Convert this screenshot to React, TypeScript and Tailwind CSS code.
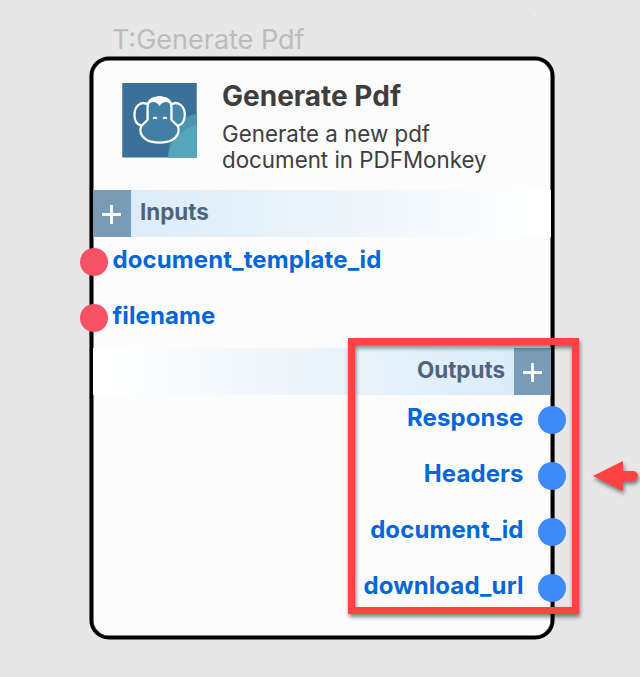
import React from "react";

function Monkey() {
  return (
    <svg viewBox="0 0 75 75" className="h-[74.5px] w-[75px] shrink-0">
      <rect width="75" height="75" fill="#3b7099" />
      <path d="M75 31C69 32 62 35 58 40C50 49 47 62 46 75H75Z" fill="#4a96b1" />
      <path d="M75 42C66 44 59 50 54 56C48 63 47 69 46 75H75Z" fill="#55a5bb" />
      <path d="M50 21C58 17 63.500 25 63.500 33C63.500 39 60 43 56 44L50 37Z" fill="#4588a8" />
      <g stroke="white" strokeWidth="2.3" strokeLinecap="round" strokeLinejoin="round">
        <path d="M24.500 21C18 18 12.300 24 12.300 32C12.300 38 15 42 19 43" fill="none" />
        <path d="M50.500 21C57 18 63 24 63 32C63 38 60 42 56.500 43" fill="none" />
        <path
          d="M25.500 24C25.500 18 30 14.500 37.500 14.500C45 14.500 49.500 18 49.500 24V37L56 43.500C57 46 57 48 56.500 50C54 57 47 60 37.500 60C28 60 21 57 18.500 50C18 48 18 46 19 43.500L25.500 37Z"
          fill="#427fa5"
        />
      </g>
      <path
        d="M25 24C25 17.500 30 13.500 37.500 13.500C45 13.500 50 17.500 50 24C48 18.500 41 17 37.500 23.500C34 17 27 18.500 25 24Z"
        fill="white"
      />
      <path d="M31 35.800Q33 34 35 35.800M41 35.800Q43 34 45 35.800" fill="none" stroke="white" strokeWidth="1.700" />
    </svg>
  );
}

function Plus() {
  return (
    <div className="flex h-full w-[37.5px] shrink-0 items-center justify-center bg-[#789bb7]">
      <svg viewBox="0 0 19 19" className="mt-[2px] h-[19px] w-[19px]">
        <path d="M9.500 0V19M0 9.500H19" stroke="white" strokeWidth="2.800" />
      </svg>
    </div>
  );
}

function Input({ name }: { name: string }) {
  return (
    <div className="relative h-[55.5px] pl-[19.5px]">
      <span className="absolute -left-[13px] top-[11px] h-7 w-7 rounded-full bg-[#f55266]" />
      <div className="pt-[5px] text-[24px] leading-[36px] font-bold tracking-[0.1px] text-[#0367d9]">{name}</div>
    </div>
  );
}

function Output({ name }: { name: string }) {
  return (
    <div className="relative h-14 pr-[27.5px] text-right">
      <span className="absolute -right-[15px] top-[10.5px] h-7 w-7 rounded-full bg-[#3d8bfb]" />
      <div className="pt-[5px] text-[24px] leading-[36px] font-bold tracking-[0.1px] text-[#0367d9]">{name}</div>
    </div>
  );
}

export default function App() {
  return (
    <div className="relative h-[677px] w-[640px] overflow-hidden bg-[#e7e7e7] pt-[24px] pl-[90px] font-['Inter',sans-serif]">
      <div className="h-[33px] pl-[22px] text-[27px] leading-8 whitespace-nowrap text-[#bcbcbc]">T:Generate Pdf</div>
      <div className="h-[582px] w-[464px] rounded-[19px] border-3 border-black bg-[#fcfcfc] shadow-[0_0_0_0.6px_#000,inset_0_0_0_0.5px_#000]">
        <div className="flex h-[130px] pt-[23px] pl-[29px]">
          <Monkey />
          <div className="pl-[25px] whitespace-nowrap text-[#3e3e3e]">
            <div className="-mt-[3px] text-[28px] leading-8 font-bold">Generate Pdf</div>
            <div className="mt-[9px] text-[22.35px] leading-[26px]">
              Generate a new pdf
              <br />
              document in PDFMonkey
            </div>
          </div>
        </div>
        <div className="flex h-[47px] bg-linear-to-r from-[#d8eaf8] to-white">
          <Plus />
          <div className="pl-[9.5px] text-[22.4px] leading-[44px] font-bold text-[#4d6480]">Inputs</div>
        </div>
        <Input name="document_template_id" />
        <Input name="filename" />
        <div className="flex h-[47px] justify-end bg-linear-to-l from-[#d8eaf8] to-white">
          <div className="pr-[8.5px] text-[22.4px] leading-[44px] font-bold text-[#4d6480]">Outputs</div>
          <Plus />
        </div>
        <Output name="Response" />
        <Output name="Headers" />
        <Output name="document_id" />
        <Output name="download_url" />
      </div>
      <div className="absolute top-[338px] left-[348px] h-[276px] w-[231px] border-[7px] border-[#ff4343] drop-shadow-[1px_3px_2px_rgba(0,0,0,0.5)]" />
      <svg viewBox="0 0 60 50" className="absolute top-[451px] left-[580px] h-[50px] w-[60px] drop-shadow-[1px_3px_2px_rgba(0,0,0,0.5)]">
        <path d="M13 25L43 10V20H53A5 5 0 0 1 53 30H43V40Z" fill="#ff4343" />
      </svg>
      <div className="absolute top-[14px] left-[527px] h-px w-1 bg-[#dcdcdc]" />
    </div>
  );
}
